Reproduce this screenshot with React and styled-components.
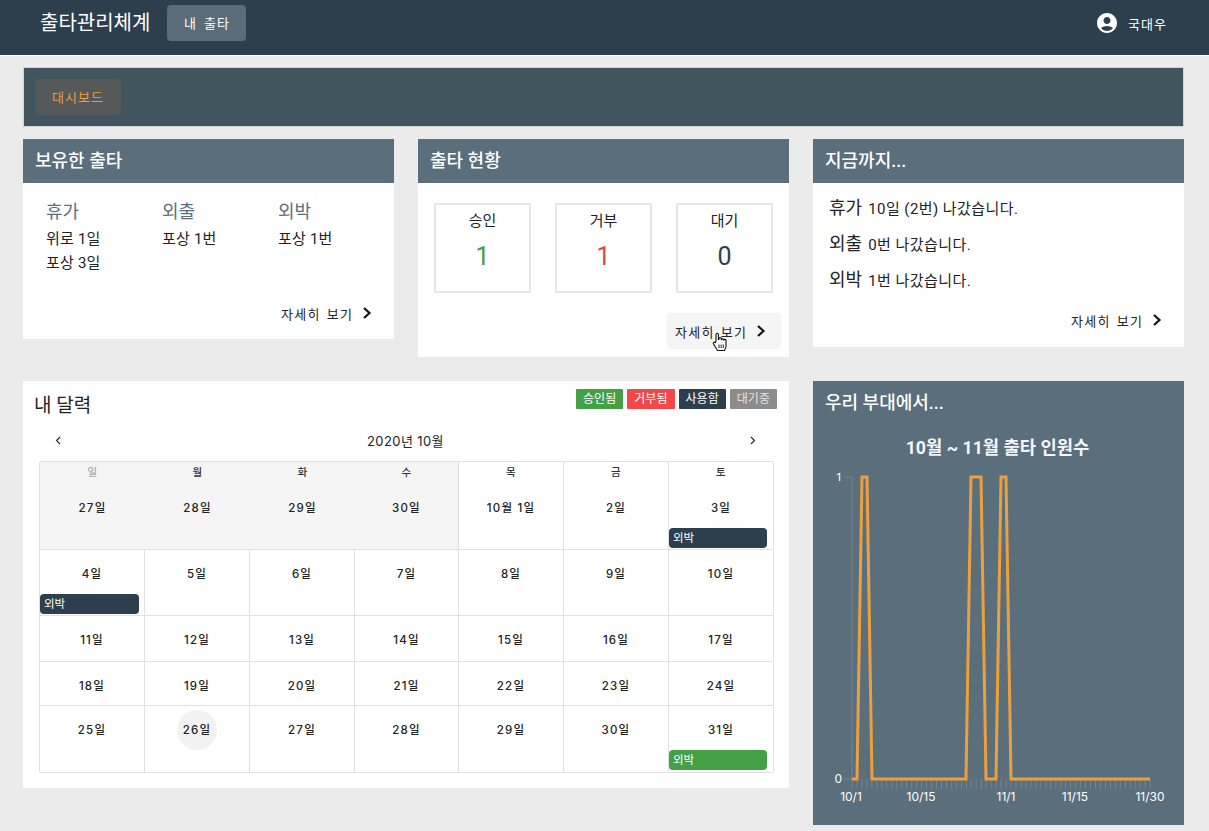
import React from "react";
import styled, { createGlobalStyle } from "styled-components";
import { MdAccountCircle } from "react-icons/md";

const Global = createGlobalStyle`
  html, body { margin: 0; padding: 0; background: #ebebeb; }
  body { font-family: Roboto, "Noto Sans CJK KR", sans-serif; color: #222; overflow: hidden; }
  * { box-sizing: border-box; }
`;

const Page = styled.div`width: 1209px; height: 831px; overflow: hidden; position: relative;`;
const Header = styled.header`
  height: 56px; background: #2d3f4c; border-bottom: 1px solid #fff;
  display: flex; align-items: flex-start; padding: 5px 42px 0 40px; color: #fff;
`;
const Brand = styled.div`font-size: 20px; line-height: 36px; margin-right: 17px; width: 110px; white-space: nowrap;`;
const TopButton = styled.div`
  width: 79px; height: 36px; border-radius: 4px; background: #5b6b78; font-size: 13px; letter-spacing: 1px; word-spacing: 3px; padding: 0 0 2px 1px;
  display: flex; align-items: center; justify-content: center;
`;
const User = styled.div`margin-left: auto; display: flex; align-items: center; gap: 9px; height: 36px; font-size: 13px; letter-spacing: 1px;`;
const Content = styled.main`padding: 11px 25px 0 23px;`;
const SubNav = styled.nav`height: 60px; background: #41555f; border: 1px solid #cdd3d6; padding: 11px;`;
const NavButton = styled.div`
  width: 86px; height: 36px; border-radius: 4px; background: #55595a; color: #e89f3c; font-size: 13px; letter-spacing: 1px; padding-bottom: 2px;
  display: flex; align-items: center; justify-content: center;
`;
const Row = styled.section`display: grid; grid-template-columns: 371px 371px 371px; gap: 24px; margin-top: 12px; align-items: start;`;
const Card = styled.article`background: #fff;`;
const CardHead = styled.h2`
  margin: 0; height: 44px; background: #5a6e7b; color: #fff; font-size: 18px; font-weight: 500; line-height: 44px; padding: 0 12px;
`;
const Holdings = styled.div`display: grid; grid-template-columns: 116px 116px 116px; padding: 16px 23px 0; height: 112px;`;
const KindName = styled.div`font-size: 18px; color: #5a6e7b; line-height: 26px; margin-bottom: 2px;`;
const Holding = styled.div`font-size: 15px; line-height: 24px; color: #222; letter-spacing: .2px;`;
const MoreRow = styled.div`display: flex; justify-content: flex-end; padding: ${p => p.$pad};`;
const More = styled.div`
  display: flex; align-items: center; justify-content: space-between; height: 36px; padding: 0 15px 0 8px;
  width: 114px; font-size: 13px; letter-spacing: 1.3px; word-spacing: 1.5px; white-space: nowrap; border-radius: 4px; color: #222;
  background: ${p => (p.$hover ? "#f5f5f5" : "transparent")};
`;
const Stats = styled.div`display: grid; grid-template-columns: repeat(3, 97px); gap: 24px; padding: 20px 16px 20px;`;
const StatBox = styled.div`height: 90px; border: 2px solid #e6e6e6; text-align: center; padding-top: 5px;`;
const StatLabel = styled.div`font-size: 15px; line-height: 22px;`;
const StatValue = styled.div`font-size: 25px; line-height: 40px; margin-top: 5px; color: ${p => p.$c};`;
const HistoryList = styled.div`padding: 7px 16px 4px;`;
const HistoryLine = styled.div`font-size: 15px; line-height: 36px; height: 36px; color: #222; letter-spacing: .45px; white-space: nowrap;`;
const HistoryKind = styled.span`font-size: 18px; letter-spacing: 0; margin-right: 6px;`;
const Lower = styled.section`display: grid; grid-template-columns: 766px 371px; gap: 24px; margin-top: 24px; align-items: start;`;
const CalCard = styled.article`background: #fff; height: 407px; padding: 8px 12px 0 16px;`;
const CalTop = styled.div`display: flex; justify-content: space-between; margin-left: -4px; height: 32px;`;
const CalTitle = styled.h3`margin: 0; font-size: 19px; font-weight: 400; line-height: 30px; padding: 2px 0 0 0; margin-left: -1px;`;
const Legend = styled.div`display: flex; gap: 4px;`;
const Tag = styled.span`
  width: 47.25px; height: 20px; background: ${p => p.$c}; color: ${p => p.$ink || "#fff"}; font-size: 12px; line-height: 20px; text-align: center; border-radius: 1px;
`;
const Month = styled.div`
  display: flex; justify-content: space-between; align-items: center; height: 24px; margin-top: 7px; padding: 0 18px 0 16px; width: 735px;
  font-size: 13px; letter-spacing: .4px; font-family: Inter, "Noto Sans CJK KR", sans-serif;
`;
const CalGrid = styled.div`
  margin-top: 9px; width: 735px; display: grid; grid-template-columns: 105px 105px 105px 104px 105px 105px 104px; grid-template-rows: 88px 66px 46px 44px 66px;
  border: 1px solid #e0e0e0; border-radius: 2px; font-family: Inter, "Noto Sans CJK KR", sans-serif;
`;
const Cell = styled.div`
  position: relative; text-align: center; padding-top: 4px;
  background: ${p => (p.$past ? "#f5f5f5" : "#fff")};
  border-bottom: ${p => (p.$last ? "none" : "1px solid #e0e0e0")};
  border-right: ${p => (p.$end || (p.$past && !p.$pastEnd) ? "none" : "1px solid #e0e0e0")};
`;
const WeekDay = styled.div`font-size: 10.500px; font-weight: 500; line-height: 14px; height: 22px; letter-spacing: .5px; color: ${p => (p.$dim ? "#aaa" : "#333")};`;
const Day = styled.div`
  width: 40px; height: 40px; margin: 0 auto; border-radius: 50%; line-height: 41px; font-size: 11.5px; font-weight: 500; letter-spacing: 1.2px; color: #222; white-space: nowrap;
  display: flex; justify-content: center;
  background: ${p => (p.$today ? "#f2f2f2" : "transparent")};
`;
const Event = styled.div`
  margin: 0 ${p => (p.$edge ? "6px" : "5px")} 0 0; height: 20px; border-radius: 4px; background: ${p => p.$c}; color: #fff; font-size: 11.5px; line-height: 20px; text-align: left; padding-left: 4px;
  font-family: Roboto, "Noto Sans CJK KR", sans-serif; letter-spacing: 0;
`;
const ChartCard = styled.article`background: #5a6e7b; height: 444px; color: #fff; padding: 9px 12px 0;`;
const ChartHead = styled.h2`margin: 0; font-size: 18px; font-weight: 500; line-height: 26px;`;
const ChartTitle = styled.div`text-align: center; font-size: 17.700px; font-weight: 700; line-height: 26px; margin-top: 19px; color: #f4f6f7; padding-right: 2px;`;
const ChartSvg = styled.svg`display: block; margin: 1px 0 0 -12px; font-family: Inter, "Liberation Sans", sans-serif;`;
const Cursor = styled.svg`position: absolute; left: 712px; top: 332px;`;

const Chevron = () => (
  <svg width="10" height="12" viewBox="0 0 10 12" fill="none" stroke="#111" strokeWidth="2.2">
    <path d="M2 1 7.500 6 2 11" />
  </svg>
);
const Thin = ({ flip }) => (
  <svg width="7" height="9" viewBox="0 0 7 9" fill="none" stroke="#222" strokeWidth="1.1">
    <path d={flip ? "M5 1 1.5 4.5 5 8" : "M2 1 5.5 4.5 2 8"} />
  </svg>
);

const DARK = "#2d3f4c";
const GREEN = "#43a047";
const rows = [
  ["27일", "28일", "29일", "30일", "10월 1일", "2일", "3일"],
  ["4일", "5일", "6일", "7일", "8일", "9일", "10일"],
  ["11일", "12일", "13일", "14일", "15일", "16일", "17일"],
  ["18일", "19일", "20일", "21일", "22일", "23일", "24일"],
  ["25일", "26일", "27일", "28일", "29일", "30일", "31일"],
];
const week = ["일", "월", "화", "수", "목", "금", "토"];
const events = { "0-6": DARK, "1-0": DARK, "4-6": GREEN };

const Chart = () => {
  const ticks = Array.from({ length: 61 }, (_, i) => 852 - 813 + i * 4.97);
  const pts = [[852,778],[857,778],[862,476],[867,476],[872,778],[966,778],[971,476],[981,476],[986,778],[996,778],[1001,476],[1006,476],[1011,778],[1150,778]]
    .map(([x, y]) => `${x - 813},${y - 461}`).join(" ");
  const labels = [["10/1", 38], ["10/15", 108], ["11/1", 193], ["11/15", 262], ["11/30", 337]];
  return (
    <ChartSvg width="371" height="350" viewBox="0 0 371 350">
      <path d="M39 15V317M31 15H39M31 317H39" stroke="#75868f" strokeWidth="1" fill="none" />
      {ticks.map((x, i) => <line key={i} x1={x} x2={x} y1="317" y2="327" stroke="#74868f" strokeWidth="1" />)}
      <polyline points={pts} fill="none" stroke="#eaa03f" strokeWidth="3" strokeLinejoin="miter" />
      <text x="28" y="19" fontSize="11" fill="#fff" textAnchor="end">1</text>
      <text x="29" y="321" fontSize="12" fill="#fff" textAnchor="end">0</text>
      {labels.map(([t, x]) => <text key={t} x={x} y="339" fontSize="12" fill="#fff" textAnchor="middle">{t}</text>)}
    </ChartSvg>
  );
};

export default function App() {
  return (
    <Page>
      <Global />
      <Header>
        <Brand>출타관리체계</Brand>
        <TopButton>내 출타</TopButton>
        <User><MdAccountCircle size={24} color="#fff" />국대우</User>
      </Header>
      <Content>
        <SubNav><NavButton>대시보드</NavButton></SubNav>
        <Row>
          <Card>
            <CardHead>보유한 출타</CardHead>
            <Holdings>
              <div><KindName>휴가</KindName><Holding>위로 1일</Holding><Holding>포상 3일</Holding></div>
              <div><KindName>외출</KindName><Holding>포상 1번</Holding></div>
              <div><KindName>외박</KindName><Holding>포상 1번</Holding></div>
            </Holdings>
            <MoreRow $pad="0 7px 8px 0"><More>자세히 보기<Chevron /></More></MoreRow>
          </Card>
          <Card>
            <CardHead>출타 현황</CardHead>
            <Stats>
              <StatBox><StatLabel>승인</StatLabel><StatValue $c="#43a047">1</StatValue></StatBox>
              <StatBox><StatLabel>거부</StatLabel><StatValue $c="#e04545">1</StatValue></StatBox>
              <StatBox><StatLabel>대기</StatLabel><StatValue $c="#2d3f4c">0</StatValue></StatBox>
            </Stats>
            <MoreRow $pad="0 8px 8px 0"><More $hover>자세히 보기<Chevron /></More></MoreRow>
          </Card>
          <Card>
            <CardHead>지금까지...</CardHead>
            <HistoryList>
              <HistoryLine><HistoryKind>휴가</HistoryKind>10일 (2번) 나갔습니다.</HistoryLine>
              <HistoryLine><HistoryKind>외출</HistoryKind>0번 나갔습니다.</HistoryLine>
              <HistoryLine><HistoryKind>외박</HistoryKind>1번 나갔습니다.</HistoryLine>
            </HistoryList>
            <MoreRow $pad="0 7px 9px 0"><More>자세히 보기<Chevron /></More></MoreRow>
          </Card>
        </Row>
        <Lower>
          <CalCard>
            <CalTop>
              <CalTitle>내 달력</CalTitle>
              <Legend>
                <Tag $c="#43a047">승인됨</Tag>
                <Tag $c="#f44848">거부됨</Tag>
                <Tag $c="#2d3f4c">사용함</Tag>
                <Tag $c="#8c8c8c" $ink="#e2e2e2">대기중</Tag>
              </Legend>
            </CalTop>
            <Month><Thin flip /><span>2020년 10월</span><Thin /></Month>
            <CalGrid>
              {rows.map((r, ri) => r.map((d, ci) => {
                const ev = events[`${ri}-${ci}`];
                return (
                  <Cell key={`${ri}-${ci}`} $past={ri === 0 && ci < 4} $pastEnd={ci === 3} $end={ci === 6} $last={ri === 4}>
                    {ri === 0 && <WeekDay $dim={ci === 0}>{week[ci]}</WeekDay>}
                    <Day $today={ri === 4 && ci === 1}>{d}</Day>
                    {ev && <Event $c={ev} $edge={ci === 6}>외박</Event>}
                  </Cell>
                );
              }))}
            </CalGrid>
          </CalCard>
          <ChartCard>
            <ChartHead>우리 부대에서...</ChartHead>
            <ChartTitle>10월 ~ 11월 출타 인원수</ChartTitle>
            <Chart />
          </ChartCard>
        </Lower>
      </Content>
      <Cursor width="16" height="20" viewBox="0 0 16 20">
        <path d="M4 9V2.5a1.2 1.2 0 0 1 2.4 0V7.5h.6V6.6a1.1 1.1 0 0 1 2.2 0v1h.5a1.1 1.1 0 0 1 2.1.2v.5a1.1 1.1 0 0 1 2.2.3V14c0 2-1 3.5-1.500 4.500H5.500C4.500 16.500 2.500 14 1.500 12c-.8-1.500.8-2.500 1.800-1.300Z" fill="#fff" stroke="#111" strokeWidth="1.100" strokeLinejoin="round" />
        <path d="M7 12.500v3.500M9.200 12.500v3.500M11.300 12.500v3.500" stroke="#111" strokeWidth=".9" />
      </Cursor>
    </Page>
  );
}
